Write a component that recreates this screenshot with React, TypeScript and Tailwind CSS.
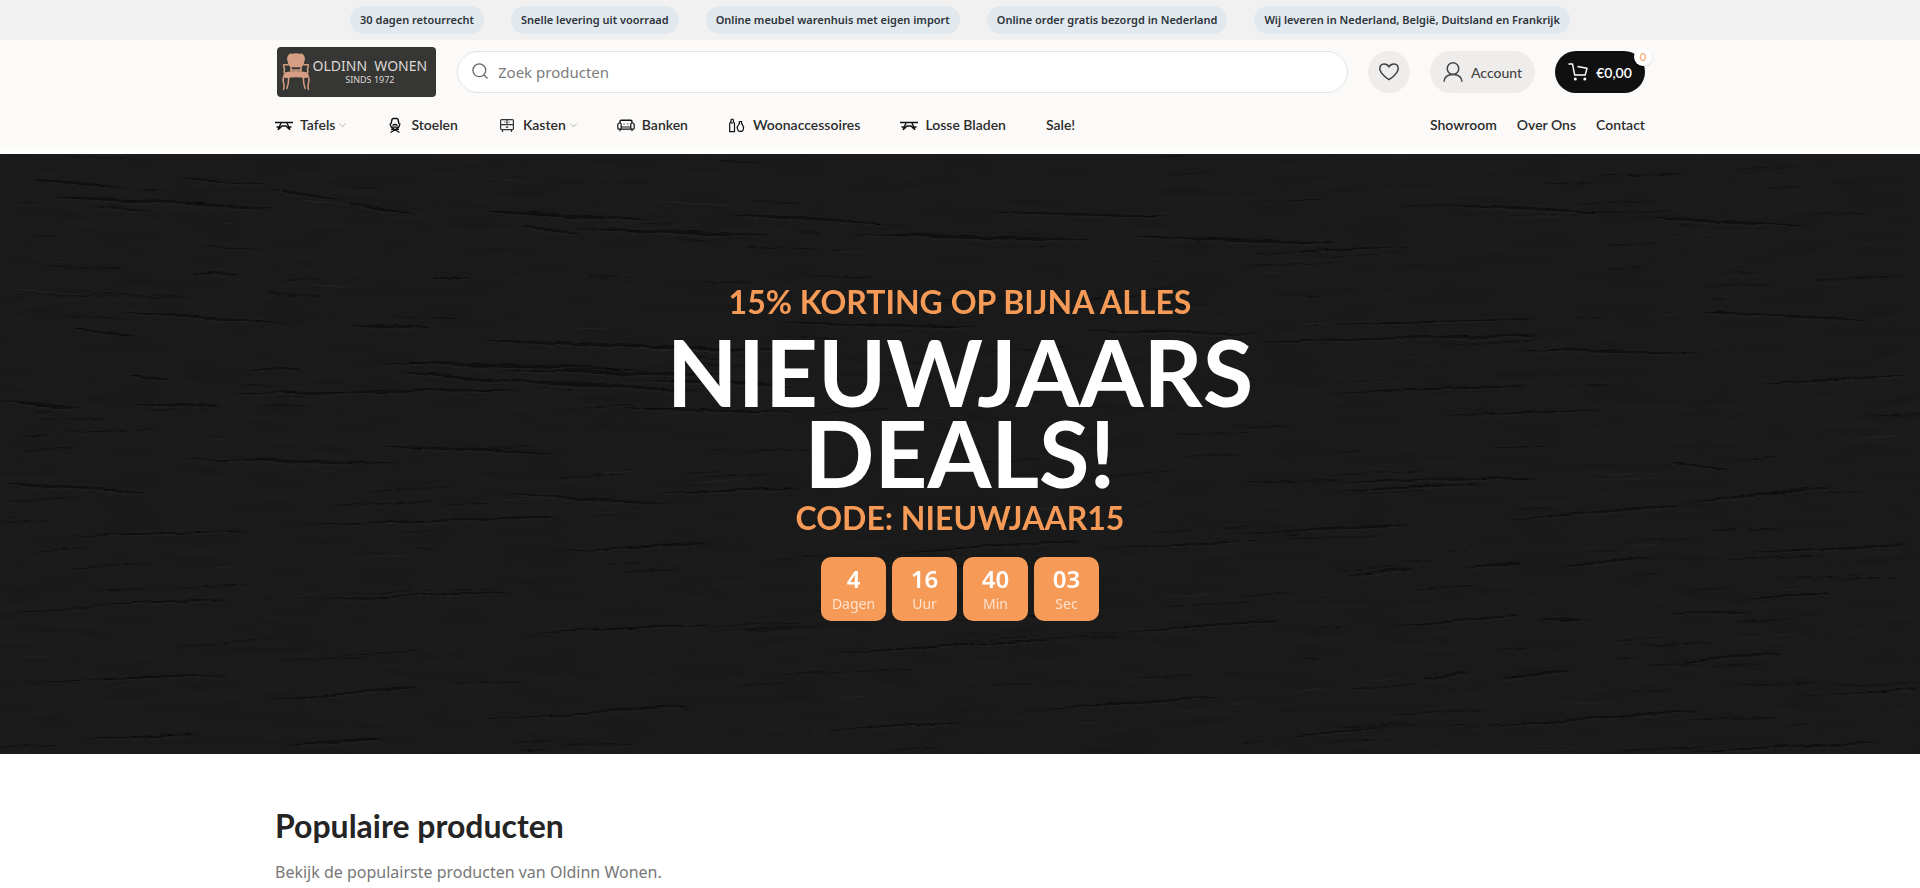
import type { ReactNode } from "react";

const display = "font-['Lato','Liberation_Sans',sans-serif]";
const body = "font-['Noto_Sans','Liberation_Sans',sans-serif]";

const notices = [
  "30 dagen retourrecht",
  "Snelle levering uit voorraad",
  "Online meubel warenhuis met eigen import",
  "Online order gratis bezorgd in Nederland",
  "Wij leveren in Nederland, België, Duitsland en Frankrijk",
];

function Icon({ children }: { children: ReactNode }) {
  return (
    <svg viewBox="0 0 18 18" className="h-[18px] w-[18px] shrink-0" fill="none" stroke="#111" strokeWidth="1.2" aria-hidden="true">
      {children}
    </svg>
  );
}

const TableIcon = () => (
  <Icon>
    <path d="M0 6.500H18" strokeWidth="1.500" />
    <path d="M6 7L3 14M12 7L15 14M1.500 11H5M13 11H16.500M4 13L7 10H11L14 13" strokeWidth="1.400" />
  </Icon>
);

const ChairIcon = () => (
  <Icon>
    <path d="M5 8L6 3.500Q6.200 2.500 7.200 2.500H10.800Q11.800 2.500 12 3.500L13 8" strokeWidth="1.400" />
    <path d="M3.900 7.500L5.200 11.200H12.800L14.100 7.500M6.500 9.500Q9 7.500 11.500 9.500M5 13.300H13M5.500 11.500L13.500 16.500M12.500 11.500L4.500 16.500" strokeWidth="1.300" />
  </Icon>
);

const CabinetIcon = () => (
  <Icon>
    <rect x="2.600" y="3.600" width="12.800" height="10" rx="1" stroke="#333" />
    <path d="M2.600 8.600H15.400M9 3.600V8.600M4.500 13.600V16M13.500 13.600V16M6.500 6.200H7.300M10.700 6.200H11.500M7.800 11.200H10.200" stroke="#333" />
  </Icon>
);

const SofaIcon = () => (
  <Icon>
    <path d="M3 7V5.500Q3 4.200 4.300 4.200H13.700Q15 4.200 15 5.500V7" strokeWidth="1.400" />
    <path d="M4 13.200H14M4.200 11H13.800M4.200 13.200V8.300Q4.200 7 2.600 7T.8 8.300V12.200Q.8 13.200 2 13.200H4.200M13.800 13.200V8.300Q13.800 7 15.400 7T17.200 8.300V12.200Q17.200 13.200 16 13.200H13.800M3 13.500V15.200M15 13.500V15.200M6.500 8H7.600M10.400 8H11.500" />
  </Icon>
);

const VaseIcon = () => (
  <Icon>
    <path d="M1.700 15.700V7.500L3 5.500V3.800Q4.200 2.200 5.400 3.800V5.500L6.500 7.500V15.700ZM4 6V8" />
    <path d="M10.800 5.500H14.200M11.500 5.500Q11.800 7.500 10.500 8.800Q8.800 10.500 9.400 12.600T11 15.300H14Q15.200 14.600 15.500 12.600T14.500 8.800Q13.200 7.500 13.500 5.500" />
  </Icon>
);

const menu: { label: string; icon?: () => ReactNode; sub?: boolean }[] = [
  { label: "Tafels", icon: TableIcon, sub: true },
  { label: "Stoelen", icon: ChairIcon },
  { label: "Kasten", icon: CabinetIcon, sub: true },
  { label: "Banken", icon: SofaIcon },
  { label: "Woonaccessoires", icon: VaseIcon },
  { label: "Losse Bladen", icon: TableIcon },
  { label: "Sale!" },
];

const timer = [
  { value: "4", unit: "Dagen" },
  { value: "16", unit: "Uur" },
  { value: "40", unit: "Min" },
  { value: "03", unit: "Sec" },
];

function Logo() {
  return (
    <a href="#" className="flex h-[50px] w-[159px] shrink-0 items-center gap-[3px] rounded-sm bg-[#363635] pl-[5px] text-[#dcd8d4]">
      <svg viewBox="0 0 28 38" className="h-[38px] w-7 shrink-0" aria-hidden="true">
        <path d="M6.500 2Q7.500 0 10.500 .8Q14 -.3 17.500 .8Q20.500 0 21.500 2Q24 5 22.200 9Q21.800 13 19.500 14.300H8.500Q6.200 13 5.800 9Q4 5 6.500 2Z" fill="#d69f83" />
        <path d="M9 14V20M19 14V20M9.500 17H18.500" stroke="#d69f83" strokeWidth="1.500" />
        <path d="M6.500 11.800H1.800Q1 14 2.500 15.500L2.100 20M21.500 11.800H26.200Q27 14 25.500 15.500L25.900 20" stroke="#d69f83" strokeWidth="1.500" fill="none" />
        <path d="M2.500 19.500Q14 16.500 25.500 19.500L26.800 22.500Q26 25.500 23 25Q14 23.500 5 25Q2 25.500 1.200 22.500Z" fill="#d69f83" />
        <path d="M2.200 23Q.4 26 1.600 30Q2.600 34 1.400 37M26 23Q27.700 26 26.500 30Q25.500 34 26.700 37M6.500 24Q7 30 4.700 36M21.500 24Q21 30 23.300 36" stroke="#d69f83" strokeWidth="1.500" fill="none" />
      </svg>
      <span className="flex flex-col items-center font-['Noto_Sans',sans-serif]">
        <span className="text-[14px] leading-4 whitespace-nowrap">OLDINN&nbsp; WONEN</span>
        <span className="text-[9px] leading-3">SINDS 1972</span>
      </span>
    </a>
  );
}

/* Main cracks of the wood surface: x, y, length, rise, thickness. */
const cracks = [
  [30, 24, 100, 9, 2], [55, 43, 150, 7, 2.4], [165, 49, 110, 5, 3], [90, 52, 60, 4, 2], [180, 24, 90, 6, 1.4],
  [265, 35, 75, 10, 2], [345, 48, 70, 12, 2], [480, 57, 170, 9, 3], [520, 72, 60, 8, 2], [590, 76, 180, 5, 3],
  [190, 119, 50, 3, 2], [430, 123, 40, 3, 1.6], [120, 158, 170, 12, 2], [350, 170, 80, 5, 3], [75, 175, 60, 7, 2.6],
  [250, 215, 50, 1, 2], [130, 221, 40, 5, 2], [380, 208, 260, 8, 3], [400, 218, 120, 10, 3], [500, 216, 260, 6, 3],
  [480, 185, 240, 11, 2.4], [220, 240, 300, -4, 3], [500, 225, 200, 12, 3], [0, 248, 80, 6, 3], [130, 250, 90, 3, 2.4],
  [600, 192, 200, 5, 2.6], [640, 226, 160, 6, 3], [620, 254, 180, 5, 2], [730, 60, 180, 12, 2], [850, 80, 240, 6, 3],
  [990, 58, 180, 5, 2], [1130, 82, 210, 7, 2.4], [1250, 100, 160, -8, 2], [1450, 50, 180, 10, 2], [1650, 64, 160, 8, 2.5],
  [780, 168, 200, 6, 2], [1080, 176, 180, 4, 2.4], [1260, 188, 280, -7, 3], [1300, 170, 240, -5, 2], [1520, 195, 180, 5, 2],
  [1700, 158, 170, 8, 2], [1760, 230, 150, -8, 2.6], [1320, 240, 210, -9, 2], [1440, 262, 160, -6, 2], [1340, 328, 200, -4, 2.6],
  [1320, 338, 160, -8, 2], [1500, 366, 180, -14, 3], [1690, 348, 140, -14, 4], [1280, 376, 130, -4, 3], [1670, 309, 60, 6, 2],
  [1345, 422, 70, -7, 2.6], [1470, 414, 50, -5, 3], [1560, 414, 90, -10, 3], [1750, 398, 160, -7, 2.4], [1370, 475, 150, -13, 2.4],
  [1540, 465, 50, 0, 3], [1670, 458, 80, 1, 2], [1730, 448, 100, -10, 2], [1420, 525, 50, -6, 3], [1500, 523, 70, -6, 3],
  [1680, 508, 100, -9, 3], [1440, 576, 260, -19, 3], [1290, 582, 90, -8, 2.6], [1680, 598, 200, -10, 3], [1790, 544, 130, -9, 1.6],
  [0, 330, 150, 8, 2], [180, 305, 220, 4, 2.5], [380, 292, 180, 8, 2], [500, 340, 180, 9, 2], [60, 382, 190, -5, 2],
  [300, 370, 260, -6, 2.5], [550, 398, 160, -8, 2], [650, 340, 150, -6, 2], [880, 400, 200, -12, 2.4], [1100, 395, 160, -8, 2],
  [80, 452, 150, -6, 2], [310, 446, 200, -8, 2.5], [520, 480, 190, -10, 2], [820, 500, 230, -14, 2.5], [1080, 480, 200, -13, 2],
  [20, 530, 210, -9, 2], [260, 546, 160, -12, 2.4], [480, 566, 210, -14, 2.5], [760, 580, 200, -12, 2], [980, 560, 240, -16, 2.4],
  [290, 590, 90, -5, 3], [70, 586, 130, -6, 2],
];

/* Fine grain between the cracks, from a small deterministic generator. */
const grain = (() => {
  let s = 7;
  const r = () => (s = (s * 16807) % 2147483647) / 2147483647;
  return Array.from({ length: 260 }, () => {
    const x = r() * 1920 - 40;
    const y = r() * 600;
    const slope = (x < 800 && y < 240 ? 0.05 : -0.045) + (r() - 0.5) * 0.05;
    const len = 20 + r() * 90;
    return [x, y, len, len * slope, 0.8 + r() * 1.2];
  });
})();

const streak = ([x, y, l, d, t]: number[]) =>
  `M${x} ${y}Q${x + l * 0.3} ${y + d * 0.2 - t / 2} ${x + l * 0.6} ${y + d * 0.6 - t / 2}T${x + l} ${y + d}Q${x + l * 0.5} ${y + d * 0.6 + t} ${x} ${y}Z`;

function Wood() {
  return (
    <svg viewBox="0 0 1920 600" preserveAspectRatio="xMidYMid slice" className="absolute inset-0 h-full w-full" aria-hidden="true">
      <defs>
        <filter id="fiber" x="0" y="0" width="100%" height="100%">
          <feTurbulence type="fractalNoise" baseFrequency="0.012 0.12" numOctaves="3" seed="4" />
          <feColorMatrix values="0 0 0 0 0  0 0 0 0 0  0 0 0 0 0  1.600 0 0 0 -0.700" />
        </filter>
        <filter id="rough" x="0" y="0" width="100%" height="100%">
          <feTurbulence type="fractalNoise" baseFrequency="0.02 0.05" numOctaves="2" seed="9" />
          <feDisplacementMap in="SourceGraphic" scale="6" xChannelSelector="R" yChannelSelector="G" />
          <feGaussianBlur stdDeviation="1 0.400" />
        </filter>
      </defs>
      <rect width="1920" height="600" fill="#1b1b1b" />
      <rect width="1920" height="600" filter="url(#fiber)" opacity="0.120" />
      <g filter="url(#rough)">
        <rect width="1920" height="600" fill="none" />
        {grain.map((g, i) => (
          <path key={i} d={streak(g)} fill={i % 4 === 0 ? "#262626" : "#111"} opacity="0.600" />
        ))}
        {cracks.map((c, i) => (
          <g key={i}>
            <path d={streak([c[0], c[1] + 2, c[2], c[3], c[4]])} fill="#262626" opacity="0.500" />
            <path d={streak(c)} fill="#0b0b0b" opacity="0.800" />
          </g>
        ))}
      </g>
    </svg>
  );
}

export default function App() {
  return (
    <div className={`min-h-screen overflow-x-hidden bg-white ${body}`}>
      <div className="flex h-10 items-start justify-center gap-[27px] bg-[#f1f1f1] pt-1.5">
        {notices.map((n) => (
          <p key={n} className="rounded-full bg-[#e1e9ef] px-2.5 text-[11px] leading-7 font-semibold whitespace-nowrap text-[#2d3339]">
            {n}
          </p>
        ))}
      </div>

      <header className="border-b-[6px] border-[#fdfdfc] bg-[#fbfaf8] pb-0.5">
        <div className={`mx-auto max-w-[1370px] ${display}`}>
          <div className="flex h-16 items-center gap-5">
            <div className="flex w-[162px] justify-center"><Logo /></div>
            <label className="flex h-[42px] flex-1 items-center gap-2.5 rounded-full border border-[#e3e3e3] bg-white pl-3.5">
              <svg viewBox="0 0 16 16" className="mb-0.5 h-4 w-4" fill="none" stroke="#666" strokeWidth="1.200" aria-hidden="true">
                <circle cx="7.300" cy="7.300" r="6.400" />
                <path d="M12 12L15.500 15.500" />
              </svg>
              <span className="sr-only">Zoek producten</span>
              <input type="search" placeholder="Zoek producten" className={`h-full flex-1 rounded-full bg-transparent text-[15px] outline-none placeholder:text-[#7c7c7c] ${body}`} />
            </label>
            <button type="button" aria-label="Verlanglijst" className="flex h-[42px] w-[42px] items-center justify-center rounded-full bg-[#eeedec]">
              <svg viewBox="0 0 20 18" className="h-[18px] w-5" fill="none" stroke="#444" strokeWidth="1.500" strokeLinejoin="round" aria-hidden="true">
                <path d="M10 16.700Q7.500 15.200 4.500 12.200Q.8 8.500.8 5.600Q.9 1.400 5 1.100Q8.300 1 10 4Q11.700 1 15 1.100Q19.100 1.400 19.200 5.600Q19.200 8.500 15.500 12.200Q12.500 15.200 10 16.700Z" />
              </svg>
            </button>
            <button type="button" className="flex h-[42px] w-[105px] items-center justify-center gap-2 rounded-full bg-[#eeedec] text-[14px] font-medium text-[#444]">
              <svg viewBox="0 0 20 20" className="h-5 w-5" fill="none" stroke="#444" strokeWidth="1.500" aria-hidden="true">
                <circle cx="10" cy="6.600" r="5.800" />
                <path d="M1 19.800Q1.500 12.600 10 12.600T19 19.800" />
              </svg>
              Account
            </button>
            <button type="button" className="relative flex h-[42px] w-[90px] items-center justify-center gap-2 rounded-full bg-[#101010] text-[14px] font-semibold text-white">
              <svg viewBox="0 0 20 18" className="h-[18px] w-5" fill="none" stroke="#fff" strokeWidth="1.400" aria-hidden="true">
                <path d="M.5 1H4.500L6.700 12H17.200L19 5.300L9.500 3.500" strokeLinejoin="round" />
                <circle cx="7.300" cy="16" r="1.500" fill="#fff" stroke="none" />
                <circle cx="16.800" cy="16" r="1.500" fill="#fff" stroke="none" />
              </svg>
              €0,00
              <span className="absolute -top-[3px] -right-[7px] flex h-[18px] w-[18px] items-center justify-center rounded-full bg-white text-[11px] font-normal text-[#f59a57] shadow-sm">0</span>
            </button>
          </div>

          <nav className="flex h-[42px] items-center justify-between text-[14px] font-semibold text-[#2b2b2b]">
            <ul className="flex gap-10">
              {menu.map(({ label, icon: I, sub }) => (
                <li key={label}>
                  <a href="#" className="flex items-center gap-[7px] leading-5 whitespace-nowrap">
                    {I && <I />}
                    <span className="flex items-center gap-1">
                      {label}
                      {sub && (
                        <svg viewBox="0 0 7 5" className="h-[5px] w-[7px]" fill="none" stroke="#bbb" aria-hidden="true">
                          <path d="M.5.5L3.500 4L6.500.5" />
                        </svg>
                      )}
                    </span>
                  </a>
                </li>
              ))}
            </ul>
            <ul className="flex gap-5">
              {["Showroom", "Over Ons", "Contact"].map((l) => (
                <li key={l}><a href="#" className="block leading-5">{l}</a></li>
              ))}
            </ul>
          </nav>
        </div>
      </header>

      <section className="relative flex h-[600px] flex-col items-center justify-center bg-[#1b1b1b] pb-2.5">
        <Wood />
        <div className={`relative flex flex-col items-center text-center font-bold text-[#f59a57] ${display}`}>
          <p className="text-[32px] leading-[50px]">15% KORTING OP BIJNA ALLES</p>
          <h1 className="pt-1 text-[92px] leading-[81px] text-white">NIEUWJAARS<br />DEALS!</h1>
          <p className="text-[32px] leading-[50px]">CODE: NIEUWJAAR15</p>
          <div className="flex gap-1.5 pt-3.5">
            {timer.map((t) => (
              <div key={t.unit} className={`flex h-16 w-[65px] flex-col items-center rounded-[10px] bg-[#f59a57] pt-1.5 text-white ${body}`}>
                <span className="text-[24px] leading-8 font-semibold">{t.value}</span>
                <span className="text-[14px] leading-[18px] font-normal text-[#fde3cf]">{t.unit}</span>
              </div>
            ))}
          </div>
        </div>
      </section>

      <section className="mx-auto max-w-[1370px] pt-12">
        <h2 className={`text-[32px] leading-[48px] font-bold text-[#242424] ${display}`}>Populaire producten</h2>
        <p className="pt-2 text-[16px] leading-7 text-[#777]">Bekijk de populairste producten van Oldinn Wonen.</p>
      </section>
    </div>
  );
}
